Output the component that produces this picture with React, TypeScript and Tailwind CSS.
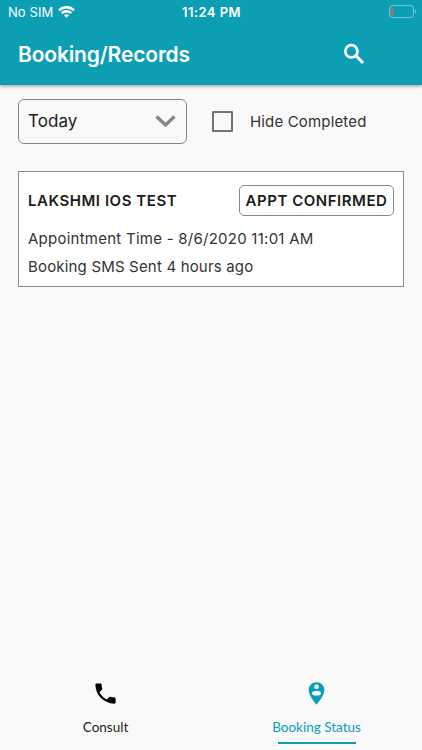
import { MdPhone } from 'react-icons/md';

function WifiIcon() {
  return (
    <svg width="17" height="12" viewBox="0 0 17 12" fill="none" stroke="white" strokeWidth="2.3">
      <path d="M1 4.4C5.2.2 11.8.2 16 4.4" />
      <path d="M3.7 7.2c2.7-2.6 6.9-2.6 9.6 0" />
      <path d="M8.5 11.7 6 9.2c1.4-1.3 3.6-1.3 5 0z" fill="white" stroke="none" />
    </svg>
  );
}

function BatteryIcon() {
  return (
    <svg width="28" height="14" viewBox="0 0 28 14" fill="none">
      <rect x="0.6" y="0.6" width="24" height="12" rx="3" stroke="white" strokeOpacity="0.45" />
      <rect x="2.2" y="2.6" width="2" height="8" rx="0.8" fill="#d0605c" />
      <path d="M26 4.6c1.8.6 1.8 3.4 0 4z" fill="white" fillOpacity="0.45" />
    </svg>
  );
}

function SearchIcon() {
  return (
    <svg width="27" height="27" viewBox="0 0 27 27" fill="none" stroke="white" strokeWidth="2.7">
      <circle cx="10.4" cy="10.3" r="6.1" />
      <path d="m14.8 14.7 7.3 7.3" strokeWidth="3.1" />
    </svg>
  );
}

function PinIcon() {
  return (
    <svg width="27" height="27" viewBox="0 0 27 27">
      <path
        d="M13.5 2.2c-4.4 0-7.9 3.5-7.9 7.9 0 5.8 7.9 14.6 7.9 14.6s7.9-8.8 7.9-14.6c0-4.4-3.5-7.9-7.9-7.9z"
        fill="currentColor"
      />
      <circle cx="13.5" cy="6.8" r="2.3" fill="white" />
      <ellipse cx="13.5" cy="13.3" rx="4.5" ry="2.3" fill="white" />
    </svg>
  );
}

function StatusBar() {
  return (
    <div className="grid h-6 grid-cols-3 items-center pl-2 text-[13px] leading-6 text-white">
      <div className="flex items-center gap-[5px]">
        <span className="tracking-[0.08px]">No SIM</span>
        <WifiIcon />
      </div>
      <span className="pr-[7px] text-center font-semibold tracking-[0.45px]">11:24 PM</span>
      <div className="flex justify-end pr-[5px] pb-px">
        <BatteryIcon />
      </div>
    </div>
  );
}

function Header() {
  return (
    <header className="h-[85px] bg-[#0c9eb3] shadow-[0_1px_4px_rgba(0,0,0,0.4)]">
      <StatusBar />
      <div className="flex h-[61px] items-center justify-between pr-[54px] pl-[18px] text-white">
        <h1 className="text-[21px] font-semibold tracking-[-0.15px]">Booking/Records</h1>
        <SearchIcon />
      </div>
    </header>
  );
}

function Filters() {
  return (
    <div className="flex items-center">
      <button className="flex h-[45px] w-[169px] items-center justify-between rounded-[6px] border border-[#888] pr-[10px] pl-[9px] text-[17px] tracking-[0.05px]">
        Today
        <svg width="21" height="13" viewBox="0 0 21 13" fill="none" stroke="#858585" strokeWidth="3.4">
          <path d="M1.5 1.5 10.5 10l9-8.5" />
        </svg>
      </button>
      <label className="ml-[25px] flex items-center gap-[17px] text-[15px] tracking-[0.16px] text-[#333]">
        <span className="size-[21px] rounded-[1px] border-2 border-[#737373]" />
        <span className="pt-px">Hide Completed</span>
      </label>
    </div>
  );
}

function BookingCard() {
  return (
    <article className="mt-[27px] h-[116px] border border-[#8b8b8b] bg-white pt-[13px] pr-[9px] pl-[9px]">
      <div className="flex h-[31px] items-center justify-between font-semibold">
        <h2 className="pt-px text-[15px] tracking-[0.55px]">LAKSHMI IOS TEST</h2>
        <span className="flex h-[31px] w-[155px] items-center justify-center rounded-[5px] border border-[#888] pt-px text-[15px] tracking-[0.53px]">
          APPT CONFIRMED
        </span>
      </div>
      <div className="mt-[9px] text-[15px] leading-[28px] text-[#333]">
        <p className="tracking-[0.25px]">Appointment Time - 8/6/2020 11:01 AM</p>
        <p className="tracking-[0.18px]">Booking SMS Sent 4 hours ago</p>
      </div>
    </article>
  );
}

function BottomTabs() {
  return (
    <nav className="grid h-[72px] grid-cols-2 font-[Lato,sans-serif] text-[13.5px]">
      <button className="flex flex-col items-center pt-[2px] text-[#222]">
        <MdPhone className="size-[27px] text-black" />
        <span className="mt-[11px] leading-[18px]">Consult</span>
      </button>
      <button className="flex flex-col items-center pt-[2px] text-[#0c9eb3]">
        <PinIcon />
        <span className="mt-[11px] leading-[18px]">Booking Status</span>
        <span className="mt-[6px] h-[2px] w-[78px] bg-[#0c9eb3]" />
      </button>
    </nav>
  );
}

export default function App() {
  return (
    <div className="flex h-[750px] w-[422px] flex-col overflow-hidden bg-[#f9f9f9] font-[Inter,sans-serif] text-[#1c1c1c]">
      <Header />
      <main className="flex-1 pt-[14px] pr-[18px] pl-[18px]">
        <Filters />
        <BookingCard />
      </main>
      <BottomTabs />
    </div>
  );
}
